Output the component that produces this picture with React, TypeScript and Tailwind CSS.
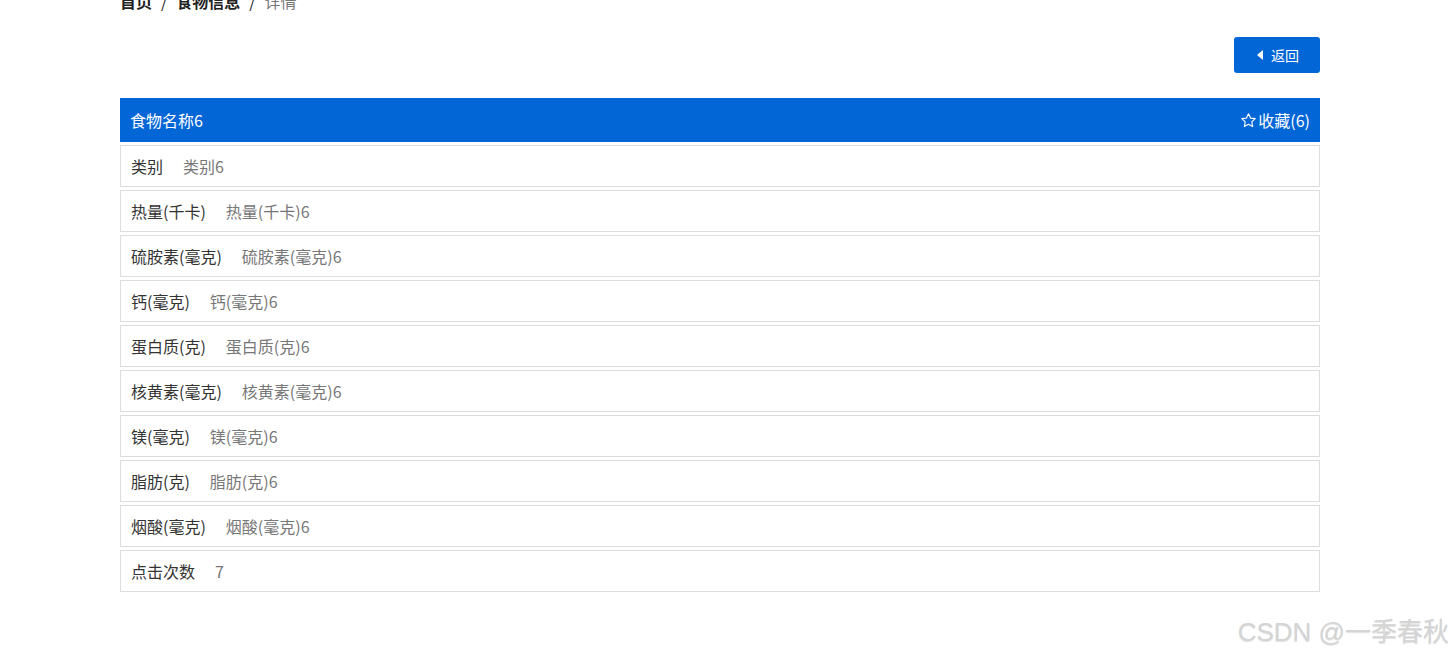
import React from 'react';

const rows: [string, string][] = [
	['类别', '类别6'],
	['热量(千卡)', '热量(千卡)6'],
	['硫胺素(毫克)', '硫胺素(毫克)6'],
	['钙(毫克)', '钙(毫克)6'],
	['蛋白质(克)', '蛋白质(克)6'],
	['核黄素(毫克)', '核黄素(毫克)6'],
	['镁(毫克)', '镁(毫克)6'],
	['脂肪(克)', '脂肪(克)6'],
	['烟酸(毫克)', '烟酸(毫克)6'],
	['点击次数', '7'],
];

function App() {
	return (
		<div
			className="relative h-[661px] overflow-hidden bg-white"
			style={{ fontFamily: '"Microsoft YaHei", "Noto Sans CJK SC", "Noto Sans", sans-serif' }}
		>
			<div className="ml-[120px] w-[1200px]">
				{/* breadcrumb, scrolled mostly off the top */}
				<div className="-mt-[11px] flex h-[24px] items-center gap-[9px] text-[16px] text-[#222]">
					<span className="font-bold">首页</span>
					<span>/</span>
					<span className="font-bold">食物信息</span>
					<span>/</span>
					<span className="text-[#777]">详情</span>
				</div>

				<div className="mt-[24px] flex justify-end">
					<button className="flex h-[36px] w-[86px] items-center justify-center gap-[7px] rounded-[3px] bg-[#0366d6] pl-[2px] text-[14px] text-white">
						<svg width="7" height="10" viewBox="0 0 7 10">
							<path d="M6 0 L0 5 L6 10 Z" fill="white" />
						</svg>
						返回
					</button>
				</div>

				<div className="mt-[25px] flex h-[44px] items-center justify-between bg-[#0366d6] px-[10px] text-[16px] text-white">
					<span>食物名称6</span>
					<span className="flex items-center">
						<svg width="17" height="17" viewBox="0 0 24 24" className="mr-[1px]">
							<path
								d="M12 2.5l2.9 6.1 6.6.8-4.9 4.6 1.3 6.6L12 17.3l-5.9 3.3 1.3-6.6-4.9-4.6 6.6-.8z"
								fill="none"
								stroke="white"
								strokeWidth="1.6"
								strokeLinejoin="round"
							/>
						</svg>
						收藏(6)
					</span>
				</div>

				<div className="flex flex-col">
					{rows.map(([label, value]) => (
						<div
							key={label}
							className="mt-[3px] flex h-[42px] items-center gap-[20px] border border-[#dddddd] px-[10px] pb-[1px] text-[16px]"
						>
							<span className="text-[#333]">{label}</span>
							<span className="text-[#777]">{value}</span>
						</div>
					))}
				</div>
			</div>

			<div
				className="absolute right-[4px] bottom-[9px] text-[26px] font-normal text-[#d4d4d4]"
				style={{
					fontFamily: '"Liberation Sans", "Noto Sans CJK SC", sans-serif',
					textShadow: '0 1px 1px rgba(0,0,0,0.12)',
				}}
			>
				CSDN @一季春秋
			</div>
		</div>
	);
}

export default App;
